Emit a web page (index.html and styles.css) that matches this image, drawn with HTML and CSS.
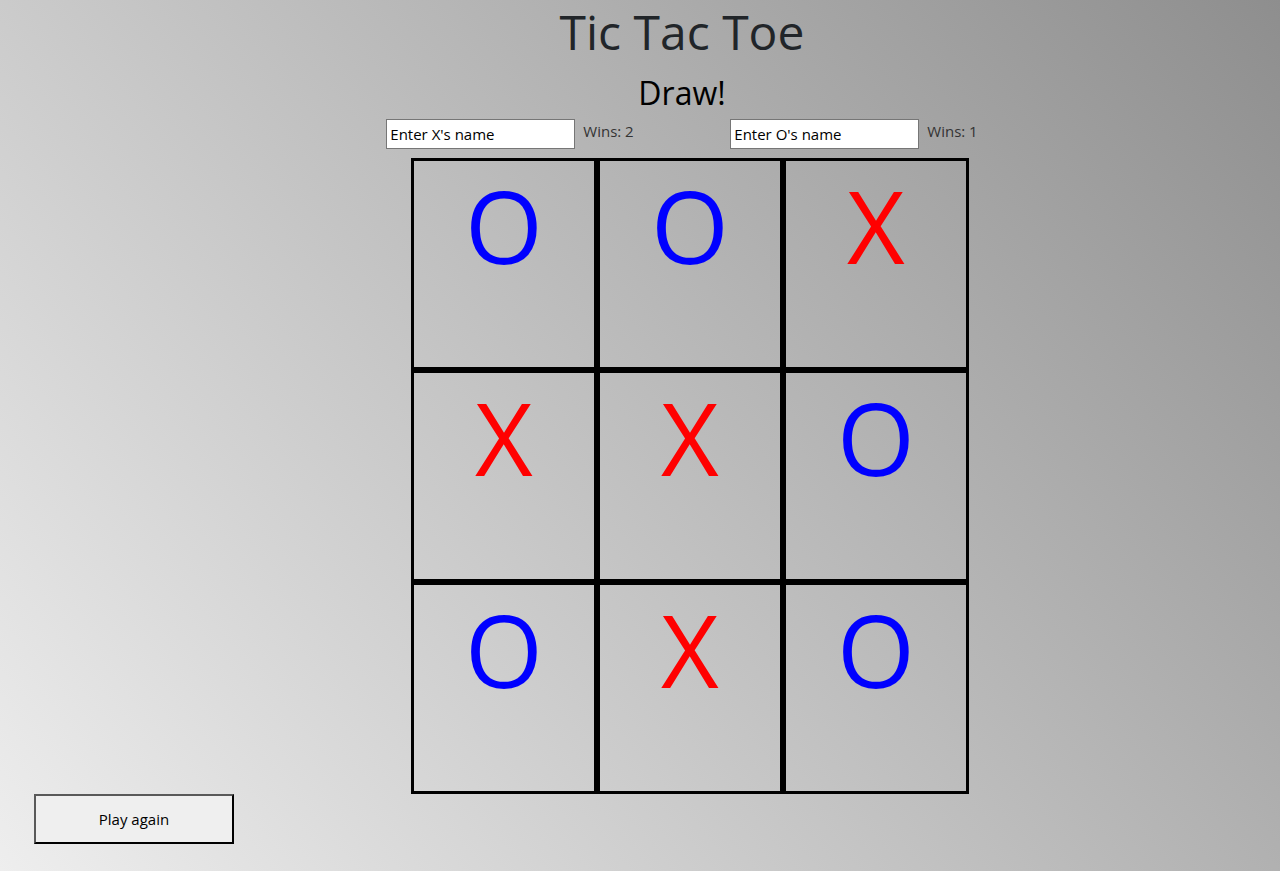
FILE: index.html
```html
<!DOCTYPE html>
<html lang="en">
<head>
<meta charset="utf-8">
<title>Tic Tac Toe</title>
<link rel="stylesheet" href="styles.css">
</head>
<body>
<main class="game">
  <h1 class="title">Tic Tac Toe</h1>
  <h2 class="status">Draw!</h2>
  <div class="players">
    <div class="player player-x">
      <input class="name" type="text" value="Enter X's name">
      <span class="wins">Wins: 2</span>
    </div>
    <div class="player player-o">
      <input class="name" type="text" value="Enter O's name">
      <span class="wins">Wins: 1</span>
    </div>
  </div>
  <div class="board">
    <div class="cell o">O</div>
    <div class="cell o">O</div>
    <div class="cell x">X</div>
    <div class="cell x">X</div>
    <div class="cell x">X</div>
    <div class="cell o">O</div>
    <div class="cell o">O</div>
    <div class="cell x">X</div>
    <div class="cell o">O</div>
  </div>
</main>
<button class="again" type="button">Play again</button>
</body>
</html>
```
FILE: styles.css
```css
html {
  height: 100%;
  background: linear-gradient(50deg, #eeeeee 0%, #8e8e8e 100%);
}

body {
  margin: 0;
  font-family: "Open Sans", "Noto Sans", sans-serif;
  color: #212529;
}

.game {
  display: flex;
  flex-direction: column;
  align-items: center;
  padding-left: 84px;
}

.title {
  margin: 0;
  font-size: 48px;
  font-weight: 400;
  line-height: 64px;
  color: #212529;
}

.status {
  margin: 9px 0 0;
  font-size: 32px;
  font-weight: 400;
  line-height: 40px;
  color: #000;
}

.players {
  display: flex;
  margin-top: 6px;
}

.player {
  display: flex;
  align-items: flex-start;
  gap: 8px;
}

.player-x {
  width: 344px;
}

.name {
  box-sizing: border-box;
  width: 189px;
  height: 30px;
  margin: 0;
  padding: 0 3px;
  border: 1px solid #767676;
  background: #fff;
  font-family: inherit;
  font-size: 15px;
  color: #000;
  outline: none;
}

.wins {
  padding-top: 2px;
  font-size: 15px;
  line-height: 20px;
  color: #333;
}

.board {
  display: grid;
  grid-template-columns: repeat(3, 186px);
  grid-template-rows: repeat(3, 212px);
  margin: 9px 0 0 16px;
}

.cell {
  box-sizing: border-box;
  border: 3px solid #000;
  padding-top: 14px;
  font-size: 100px;
  line-height: 1;
  text-align: center;
}

.cell.o {
  color: #0000ff;
}

.cell.x {
  color: #ff0000;
}

.again {
  display: block;
  box-sizing: border-box;
  width: 200px;
  height: 50px;
  margin: 0 0 0 34px;
  border: 2px solid;
  border-color: #595959 #000 #000 #595959;
  background: #efefef;
  font-family: "Open Sans", "Noto Sans", sans-serif;
  font-size: 15px;
  color: #000;
}
```
